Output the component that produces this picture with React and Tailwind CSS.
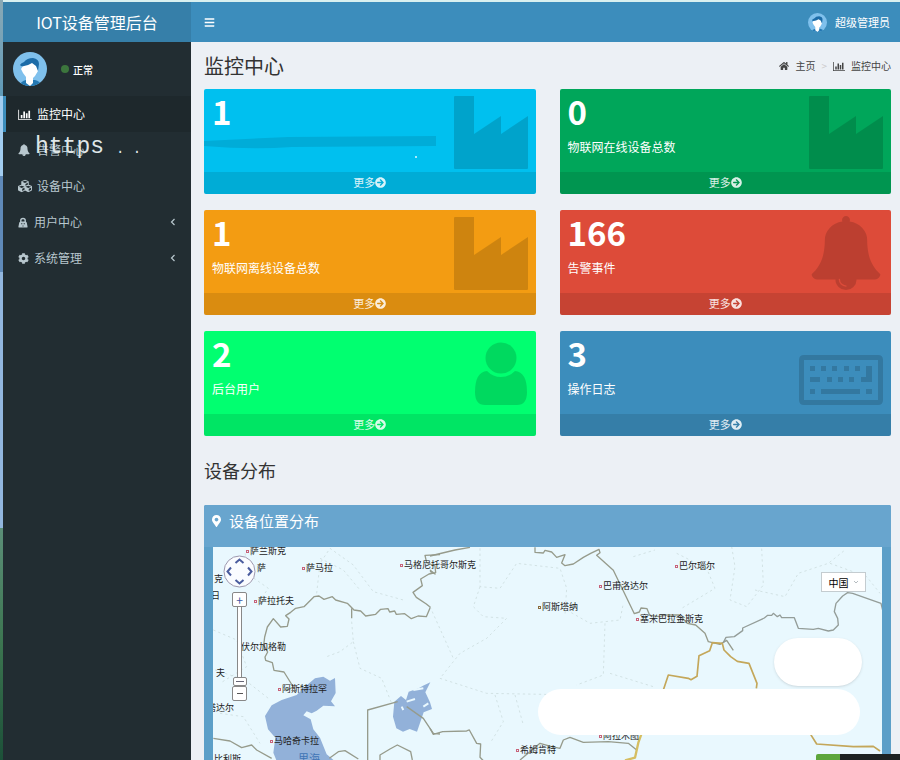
import React from "react";
import {
  FaArrowCircleRight,
  FaBars,
  FaCog,
  FaCubes,
  FaHome,
  FaMapMarkerAlt,
} from "react-icons/fa";

function ChartIcon({ className }) {
  return (
    <svg viewBox="0 128 2048 1664" className={className} fill="currentColor" aria-hidden="true">
      <path d="M640 1024v512h-256v-512h256zM1024 512v1024h-256v-1024h256zM2048 1664v128h-2048v-1536h128v1408h1920zM1408 768v768h-256v-768h256zM1792 384v1152h-256v-1152h256z" />
    </svg>
  );
}

function BellIcon({ className }) {
  return (
    <svg viewBox="0 0 1792 1792" className={className} fill="currentColor" aria-hidden="true">
      <path d="M912 1696q0-16-16-16-59 0-101.5-42.5t-42.5-101.5q0-16-16-16t-16 16q0 73 51.5 124.5t124.5 51.5q16 0 16-16zm816-288q0 52-38 90t-90 38h-448q0 106-75 181t-181 75-181-75-75-181h-448q-52 0-90-38t-38-90q50-42 91-88t85-119.5 74.5-158.5 50-206 19.5-260q0-152 117-282.5t307-158.5q-8-19-8-39 0-40 28-68t68-28 68 28 28 68q0 20-8 39 190 28 307 158.5t117 282.5q0 139 19.5 260t50 206 74.5 158.5 85 119.5 91 88z" />
    </svg>
  );
}

function AgentIcon({ className }) {
  return (
    <svg viewBox="0 0 12 12" className={className} fill="currentColor" fillRule="evenodd" aria-hidden="true">
      <path d="M2.500 5V3.500a3.500 3.300 0 0 1 7 0V5l1 1 1 5q0 1-1 1h-9q-1 0-1-1l1-5zM4.200 3.400v1.400h3.600V3.400a1.800 1.300 0 0 0-3.600 0zM3.800 7v1.200h1.400V7zm3 0v1.200h1.400V7zM5.400 9.500v1.200h1.200V9.500z" />
    </svg>
  );
}

function AngleLeft() {
  return (
    <svg viewBox="0 0 6 8" className="ml-auto h-2 w-1.5" fill="none" stroke="currentColor" strokeWidth="1.2" aria-hidden="true">
      <path d="M4.500 1L1.500 4l3 3" />
    </svg>
  );
}

function IndustryArt() {
  return (
    <svg viewBox="0 0 74 74" className="mt-1.5 h-[74px] w-[74px]" fill="currentColor" aria-hidden="true">
      <path d="M1 1h19v38l27-18v18l27-18v52q0 1-1 1H1q-1 0-1-1V2q0-1 1-1z" />
    </svg>
  );
}

function BellArt() {
  return <BellIcon className="mt-1.5 h-[74px] w-[74px]" />;
}

function UserArt() {
  return (
    <svg viewBox="0 0 52 64" className="mt-[11px] mr-px h-16 w-[52px]" fill="currentColor" aria-hidden="true">
      <circle cx="26" cy="16" r="15.500" />
      <path d="M12 29q6 6 14 6t14-6q12 1 12 21 0 13-10 13H10Q0 63 0 50q0-20 12-21z" />
    </svg>
  );
}

function KeyboardArt() {
  return (
    <svg viewBox="0 0 84 50" className="mt-6 h-[50px] w-[84px]" fill="currentColor" aria-hidden="true">
      <path fillRule="evenodd" d="M5 0h74q5 0 5 5v40q0 5-5 5H5q-5 0-5-5V5q0-5 5-5zM5 5v40h74V5z" />
      <path d="M11 11h5v5h-5zM22 11h5v5h-5zM33 11h5v5h-5zM45 11h5v5h-5zM56 11h5v5h-5zM67 11h6v16H62v-5h5zM11 22h10v5H11zM28 22h5v5h-5zM39 22h5v5h-5zM50 22h5v5h-5zM11 34h5v5h-5zM22 34h39v5H22zM67 34h6v5h-6z" />
    </svg>
  );
}

function Avatar({ className }) {
  return (
    <svg viewBox="0 0 34 34" className={className} role="img" aria-label="头像">
      <clipPath id="avatarClip">
        <circle cx="17" cy="17" r="17" />
      </clipPath>
      <g clipPath="url(#avatarClip)">
        <rect width="34" height="34" fill="#7fc0ec" />
        <path d="M6 34q2-5 7-6h9q5 1 7 6z" fill="#2478b2" />
        <path d="M10 14l8-4 6 2 1 7-3 5-2 2v5l-3 3-4-3v-6l-3-4-2-4z" fill="#fff" />
        <path d="M7 13q1-2 4-3 3-4 9-4 6 1 6 6l-1 7-2-5-4-3q-6 4-11 3z" fill="#1c6ca8" />
      </g>
    </svg>
  );
}

const menu = [
  { text: "监控中心", icon: <ChartIcon className="h-[11px] w-[14px]" />, active: true, wide: true },
  { text: "告警中心", icon: <BellIcon className="h-3 w-3" />, wide: true },
  { text: "设备中心", icon: <FaCubes className="h-[14px] w-[14px]" />, wide: true },
  { text: "用户中心", icon: <AgentIcon className="h-[11px] w-[10px]" />, open: true },
  { text: "系统管理", icon: <FaCog className="h-[11px] w-[11px]" />, open: true },
];

const cards = [
  { value: "1", label: "", color: "bg-[#00c0ef]", art: <IndustryArt />, smudge: true },
  { value: "0", label: "物联网在线设备总数", color: "bg-[#00a65a]", art: <IndustryArt /> },
  { value: "1", label: "物联网离线设备总数", color: "bg-[#f39c12]", art: <IndustryArt /> },
  { value: "166", label: "告警事件", color: "bg-[#dd4b39]", art: <BellArt /> },
  { value: "2", label: "后台用户", color: "bg-[#01ff70]", art: <UserArt /> },
  { value: "3", label: "操作日志", color: "bg-[#3c8dbc]", art: <KeyboardArt /> },
];

const places = [
  { name: "萨兰斯克", x: 33, y: 4, dot: true },
  { name: "萨", x: 44, y: 21 },
  { name: "萨马拉", x: 89, y: 21, dot: true },
  { name: "马格尼托哥尔斯克", x: 187, y: 18, dot: true },
  { name: "克", x: 1, y: 32 },
  { name: "日", x: -2, y: 49 },
  { name: "萨拉托夫", x: 41, y: 54, dot: true },
  { name: "伏尔加格勒", x: 28, y: 100 },
  { name: "夫", x: 3, y: 126 },
  { name: "塔达尔", x: -6, y: 161 },
  { name: "阿斯特拉罕", x: 65, y: 142, dot: true },
  { name: "马哈奇卡拉", x: 57, y: 194, dot: true },
  { name: "比利斯", x: 1, y: 212 },
  { name: "巴甫洛达尔", x: 386, y: 39, dot: true },
  { name: "阿斯塔纳", x: 325, y: 60, dot: true, capital: true },
  { name: "塞米巴拉金斯克", x: 423, y: 72, dot: true },
  { name: "巴尔瑙尔", x: 462, y: 19, dot: true },
  { name: "阿拉木图", x: 386, y: 189, dot: true },
  { name: "希姆肯特", x: 303, y: 203, dot: true },
];

function StatCard({ card }) {
  return (
    <section className={`relative flex h-[105px] flex-col overflow-hidden rounded-xs text-white ${card.color}`}>
      <div className="flex min-h-0 flex-1 justify-between px-2">
        <div>
          <p className="mt-1 text-[33px] leading-9 font-bold">{card.value}</p>
          <p className="mt-2.5 text-xs leading-4">{card.label}</p>
        </div>
        <div className="text-black/15">{card.art}</div>
      </div>
      {card.smudge && (
        <svg viewBox="0 0 240 30" className="absolute top-11 left-0 h-[30px] w-60" aria-hidden="true">
          <path d="M0 8l84-4 148-1v10l-144 1q-40 3-88-1z" fill="#00acd8" />
          <circle cx="212" cy="24" r="1" fill="#dff8ff" />
        </svg>
      )}
      <a href="#more" className="flex h-[22px] items-center justify-center bg-black/10 pb-0.5 text-[11px] leading-4 text-white/85">
        更多
        <FaArrowCircleRight className="h-[11px] w-[11px]" />
      </a>
    </section>
  );
}

function MapDrawing() {
  return (
    <svg viewBox="213 547 669 213" className="absolute top-0 left-0 h-[213px] w-[669px]" fill="none" strokeLinejoin="round" aria-hidden="true">
      <g transform="translate(200 540) scale(.33333)">
        <g fill="#92b1d9">
          <path d="M195 528l20-32 30-16 45-15 25-25 30-25 25-5 20 12 15-8 2 45-14 25 12 15-35-2-20 15-15 8-15-6-10 12 22 12 8 30 20 25 20 50 24 20v50H250l-30-75 6-45-22-25z" />
          <path d="M583 485l20-17 15 12 8-25 30-10 13-8 22-10-15 30 14 30 6 20-25 10-20 58-22-8-20 8-20-10-10-35z" />
        </g>
        <g stroke="#e9f8fe" strokeWidth="6">
          <path d="M605 500l5 10M640 450l30-5M670 500l15-10M620 485l25-8" />
        </g>
        <g stroke="#969b8c" strokeWidth="4">
          <path d="M720 44l-45 2 5 22 25 10 2 20-20 4-25 15 5 20-28 20 10 15 30 20 12 10-12 28-25-2-20 8-20-15-25 2-5-10-15 3-5-10-22 2-15 15-30 5-15-15-20-3-20-20-35-10-10-10-25 8-15-10-15 2-30 30-25 5-15 12-15 10 10 10-5 22-20 2-22-25-18 25-8 30-3 25 12 20-8 15 2 10 20 7 5 23 30 5 28 45-20 10" />
          <path d="M503 660V510l90-25M620 500l50 35 30 45 20 2M540 660v-15l30-18 22-12 40 20 5 25M388 655l27-20 20-3 40 25M40 595l50 8 35 20 30-8 15 15 45 25M455 205v30" />
        </g>
        <g stroke="#c6d6d7" strokeWidth="2" strokeDasharray="7 9">
          <path d="M135 40l20 70 50 35-35 50M350 160l10-90 30-45 70 50 60 80 90 25M360 55l70 35 50 60M455 245l5 60-40 30-40 15M460 305l20 80 65 30 30 75M40 270l70 30 30 80-80 50M45 390l90 30 70 55M60 520l70 10 50 80" />
        </g>
      </g>
      <g transform="translate(430 540) scale(.33333)">
        <g stroke="#969b8c" strokeWidth="4">
          <path d="M0 48l75-18 45-8M315 22v15l25 2 5-8 20 5 15 16 25-8-10 25 10 8 25-5 30-20 22-12 25-12 3 10-10 8 50 45 63 130 15-5 5-12 18 2 8 20 30 4 18-5h40l25 25 25 5 28 25 10 25 35 8 20-12 20 30" />
          <path d="M0 90l15 12-15-8M0 565l10 18 28-8 72-2 8-3 22 40 12 2-2 40 15 15M270 660l60-50 35 10 25 5 10-25 20-8 40 15 75-2 60 5 25 20" />
        </g>
        <g stroke="#c6d6d7" strokeWidth="2" strokeDasharray="7 9">
          <path d="M150 25v115l60 5 50-75 130 15 20 60-5 80M150 140l-20 60 30 30 70 5-60 60-80 45-60 75 140 45 280 5M410 210l70 40 90-10 10-50M525 250l-5 155-80 30M540 400l130 40M0 200l70 155M195 465l25 80-40 65M255 465l25 90M610 50l65-20" />
        </g>
        <path d="M635 580l-10 28-10 45-30 8" stroke="#d5be62" strokeWidth="7" />
      </g>
      <g transform="translate(660 540) scale(.33333)">
        <path d="M190 308l8-16 25-2 25-18v-8l65-30 10-8h12l5-6 12 10 8-5 5 8h38l12 32 45 3 15-3 30 8 15-3 15-15-2-20-10-20 5-25 20-22 15-10 15 2 85 30 6 25" stroke="#949d99" strokeWidth="4" />
        <g strokeWidth="5" stroke="#c4a75a">
          <path d="M10 450l15-45 60 10 8 4 18-10 6-62 32-15 8-24 30 2 5 20 20 20 20 14 35 6 24 60-2 15M450 580l20 32 110 8 60-1 20 14" />
        </g>
        <g stroke="#c6d6d7" strokeWidth="2" strokeDasharray="7 9">
          <path d="M50 40l90 45 25 60-100 60M215 20l10 60-15 100 50 20 50-65-5-110M285 150l90 20 40-70 90-30 50-40M510 70l110 40 40 50" />
        </g>
      </g>
    </svg>
  );
}

function MapControls() {
  return (
    <>
      <svg viewBox="0 0 34 34" className="absolute top-2 left-2.5 h-[34px] w-[34px]" fill="none" aria-hidden="true">
        <circle cx="16.500" cy="16.500" r="15.500" fill="#fafcff" stroke="#9d98ae" />
        <path d="M12.500 8l4-3.500 4 3.500M12.500 25l4 3.500 4-3.500M8 12.500L4.500 16.500 8 20.500M25 12.500l3.500 4-3.500 4" stroke="#4a5c9e" strokeWidth="2" />
      </svg>
      <div className="absolute top-[45px] left-[19px] flex w-[15px] flex-col items-center">
        <button aria-label="放大" className="flex h-[15px] w-[15px] items-center justify-center rounded-xs border border-[#888] bg-white text-xs leading-3 text-[#3f58a5]">
          +
        </button>
        <div className="h-[70px] w-[5px] border-x border-[#888] bg-white" />
        <div className="flex h-[9px] w-[14px] items-center justify-center rounded-xs border border-[#888] bg-white">
          <i className="h-px w-2 bg-[#667]" />
        </div>
        <button aria-label="缩小" className="flex h-[15px] w-[15px] items-center justify-center rounded-xs border border-[#888] bg-white">
          <i className="h-px w-1.5 bg-[#555]" />
        </button>
      </div>
      <button className="absolute top-[25px] right-4 flex h-5 w-[45px] items-center justify-center gap-1 border border-[#c4ccd0] bg-white text-[10px] text-black">
        中国
        <svg viewBox="0 0 6 4" className="h-1 w-1.5" fill="none" stroke="#b5bcc0" aria-hidden="true">
          <path d="M1 1l2 2 2-2" />
        </svg>
      </button>
    </>
  );
}

export default function App() {
  return (
    <div className="relative flex h-screen overflow-hidden bg-[#ecf0f5] font-['Noto_Sans_CJK_SC','Noto_Sans',sans-serif] text-[#333]">
      <div className="flex w-[3px] shrink-0 flex-col">
        <i className="h-24 bg-linear-to-b from-[#8aa9b5] to-[#5f9ab8]" />
        <i className="h-20 bg-[#a3cdf0]" />
        <i className="h-24 bg-[#5f89b8]" />
        <i className="h-64 bg-[#92b6de]" />
        <i className="flex-1 bg-linear-to-b from-[#5c8f78] via-[#3c7550] to-[#1c5038]" />
      </div>
      <div className="flex min-w-0 flex-1 flex-col border-t-2 border-[#d9f0f0]">
        <header className="flex h-10 shrink-0 bg-[#3c8dbc] text-white">
          <div className="flex w-[188px] shrink-0 items-center justify-center bg-[#367fa9] text-base">IOT设备管理后台</div>
          <div className="flex flex-1 items-center justify-between pr-2.5 pl-[13px]">
            <button aria-label="切换菜单">
              <FaBars className="h-[11px] w-[11px]" />
            </button>
            <div className="flex items-center gap-2 text-[11px]">
              <Avatar className="h-[19px] w-[19px]" />
              <span>超级管理员</span>
            </div>
          </div>
        </header>

        <div className="flex min-h-0 flex-1">
          <aside className="relative w-[188px] shrink-0 bg-[#222d32] text-[#b8c7ce]">
            <div className="flex h-[54px] items-center pl-2.5 text-white">
              <Avatar className="h-[34px] w-[34px]" />
              <i className="ml-3.5 h-2 w-2 rounded-full bg-[#3c763d]" />
              <span className="ml-1 text-[10px] font-medium">正常</span>
            </div>
            <nav>
              {menu.map((item) => (
                <a
                  key={item.text}
                  href="#menu"
                  className={`flex h-9 items-center border-l-3 pr-[15px] pl-3 text-xs ${
                    item.active ? "border-[#3c8dbc] bg-[#1e282c] text-white" : "border-transparent"
                  }`}
                >
                  <span className={`flex items-center ${item.wide ? "w-[19px]" : "w-4"}`}>{item.icon}</span>
                  {item.text}
                  {item.open && <AngleLeft />}
                </a>
              ))}
            </nav>
            <div className="absolute top-[89px] left-8 font-['Liberation_Mono',monospace] text-[23px] leading-8 whitespace-pre text-[#dfe6e8]">
              https
              <span className="ml-3 text-sm">. .</span>
            </div>
          </aside>

          <main className="min-w-0 flex-1 pr-[9px] pl-[13px]">
            <div className="flex h-[47px] items-center justify-between">
              <h1 className="text-xl text-[#333]">监控中心</h1>
              <div className="flex items-center text-[10px] text-[#444]">
                <FaHome className="mr-1.5 h-[10px] w-[10px]" />
                <a href="#home">主页</a>
                <span className="mx-1.5 text-[#ccc]">&gt;</span>
                <ChartIcon className="mr-1.5 h-[10px] w-3" />
                <span>监控中心</span>
              </div>
            </div>
            <div className="grid grid-cols-2 gap-x-6 gap-y-4">
              {cards.map((card, i) => (
                <StatCard key={i} card={card} />
              ))}
            </div>
            <h2 className="pt-[22px] pb-[23px] text-lg leading-6 text-[#333]">设备分布</h2>

            <section className="rounded-xs bg-[#5c9fc8] px-[9px] pb-2.5">
              <h3 className="-mx-[9px] flex h-[42px] gap-2 rounded-t-xs bg-[#68a5ce] px-2 pt-1 text-[15px] leading-6 text-white">
                <FaMapMarkerAlt className="mt-1.5 h-3 w-[9px]" />
                设备位置分布
              </h3>
              <div className="relative h-[320px] overflow-hidden bg-[#e9f8fe]">
                <MapDrawing />
                {places.map((p) => (
                  <span
                    key={p.name}
                    className="absolute flex h-3 -translate-y-1/2 items-center text-[9px] leading-3 whitespace-nowrap text-[#222]"
                    style={{ left: p.x, top: p.y }}
                  >
                    {p.dot && (
                      <i className={`mr-px h-[3px] w-[3px] border ${p.capital ? "border-[#8a6a3a]" : "border-[#c7637a]"}`} />
                    )}
                    {p.name}
                  </span>
                ))}
                <span className="absolute top-[203px] left-[85px] text-[11px] leading-4 text-[#3f74b5]">里海</span>
                <MapControls />
                <div className="absolute top-[91px] right-5 h-[48px] w-[88px] rounded-full bg-white shadow-sm" />
                <div className="absolute top-[142px] right-[22px] h-[46px] w-[322px] rounded-full bg-white" />
              </div>
            </section>
          </main>
        </div>
      </div>
      <div className="absolute right-0 bottom-0 flex h-1.5">
        <i className="w-6 rounded-tl-xs bg-[#5da63c]" />
        <i className="w-[60px] bg-[#1d2223]" />
      </div>
    </div>
  );
}
